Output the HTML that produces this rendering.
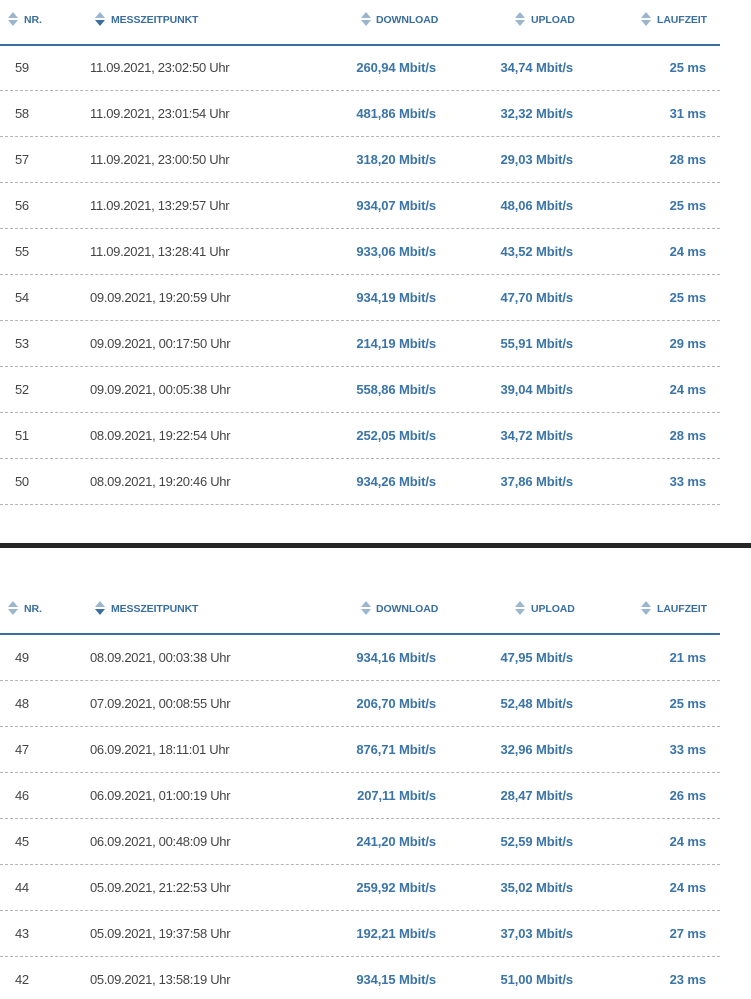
<!DOCTYPE html>
<html><head><meta charset="utf-8"><style>
*{margin:0;padding:0;box-sizing:border-box}
body{width:751px;height:999px;background:#fff;position:relative;overflow:hidden;font-family:"Liberation Sans",Arial,sans-serif}
.t{position:absolute;white-space:nowrap}
.h{font-size:10.5px;font-weight:bold;color:#3a6e9e;letter-spacing:-0.1px}
.d{font-size:13px;color:#444;letter-spacing:-0.3px}
.b{font-size:13px;font-weight:bold;color:#3a74a8;letter-spacing:-0.1px}
.r{text-align:right}
.line{position:absolute;left:0;width:720px;height:2px;background:#3a6e9e}
.dash{position:absolute;left:0;width:720px;border-top:1px dashed #b5b5b5}
.ic{position:absolute;width:10px;height:14px}
</style></head><body>
<div id="root"></div>
<div style="position:absolute;left:0;top:543px;width:751px;height:5px;background:#262626"></div>
<script>
var t1=[["59","11.09.2021, 23:02:50 Uhr","260,94","34,74","25"],["58","11.09.2021, 23:01:54 Uhr","481,86","32,32","31"],["57","11.09.2021, 23:00:50 Uhr","318,20","29,03","28"],["56","11.09.2021, 13:29:57 Uhr","934,07","48,06","25"],["55","11.09.2021, 13:28:41 Uhr","933,06","43,52","24"],["54","09.09.2021, 19:20:59 Uhr","934,19","47,70","25"],["53","09.09.2021, 00:17:50 Uhr","214,19","55,91","29"],["52","09.09.2021, 00:05:38 Uhr","558,86","39,04","24"],["51","08.09.2021, 19:22:54 Uhr","252,05","34,72","28"],["50","08.09.2021, 19:20:46 Uhr","934,26","37,86","33"]];
var t2=[["49","08.09.2021, 00:03:38 Uhr","934,16","47,95","21"],["48","07.09.2021, 00:08:55 Uhr","206,70","52,48","25"],["47","06.09.2021, 18:11:01 Uhr","876,71","32,96","33"],["46","06.09.2021, 01:00:19 Uhr","207,11","28,47","26"],["45","06.09.2021, 00:48:09 Uhr","241,20","52,59","24"],["44","05.09.2021, 21:22:53 Uhr","259,92","35,02","24"],["43","05.09.2021, 19:37:58 Uhr","192,21","37,03","27"],["42","05.09.2021, 13:58:19 Uhr","934,15","51,00","23"]];
function icon(x,y,act){var up="#9bb5cc",dn=act?"#3a6e9e":"#9bb5cc";return '<svg class="ic" style="left:'+x+'px;top:'+y+'px" viewBox="0 0 10 14"><path d="M5 0L10 6H0Z" fill="'+up+'"/><path d="M0 8H10L5 14Z" fill="'+dn+'"/></svg>';}
var h="";
function table(hy,ly,rows,rows0){
 var ty=hy-5;
 h+=icon(8,hy-7,0)+'<div class="t h" style="left:24px;top:'+ty+'px">NR.</div>';
 h+=icon(95,hy-7,1)+'<div class="t h" style="left:111px;top:'+ty+'px">MESSZEITPUNKT</div>';
 h+=icon(361,hy-7,0)+'<div class="t h" style="left:376px;top:'+ty+'px">DOWNLOAD</div>';
 h+=icon(515,hy-7,0)+'<div class="t h" style="left:531px;top:'+ty+'px">UPLOAD</div>';
 h+=icon(641,hy-7,0)+'<div class="t h" style="left:657px;top:'+ty+'px">LAUFZEIT</div>';
 h+='<div class="line" style="top:'+ly+'px"></div>';
 rows.forEach(function(r,i){var y=rows0+i*46;
  h+='<div class="t d" style="left:15px;top:'+(y-7)+'px">'+r[0]+'</div>';
  h+='<div class="t d" style="left:90px;top:'+(y-7)+'px">'+r[1]+'</div>';
  h+='<div class="t b r" style="right:315px;top:'+(y-7)+'px">'+r[2]+' Mbit/s</div>';
  h+='<div class="t b r" style="right:178px;top:'+(y-7)+'px">'+r[3]+' Mbit/s</div>';
  h+='<div class="t b r" style="right:45px;top:'+(y-7)+'px">'+r[4]+' ms</div>';
  if(y+23<999)h+='<div class="dash" style="top:'+(y+23)+'px"></div>';
 });
}
table(19,44,t1,67);
table(608,633,t2,657);
document.getElementById("root").innerHTML=h;
</script>
</body></html>
